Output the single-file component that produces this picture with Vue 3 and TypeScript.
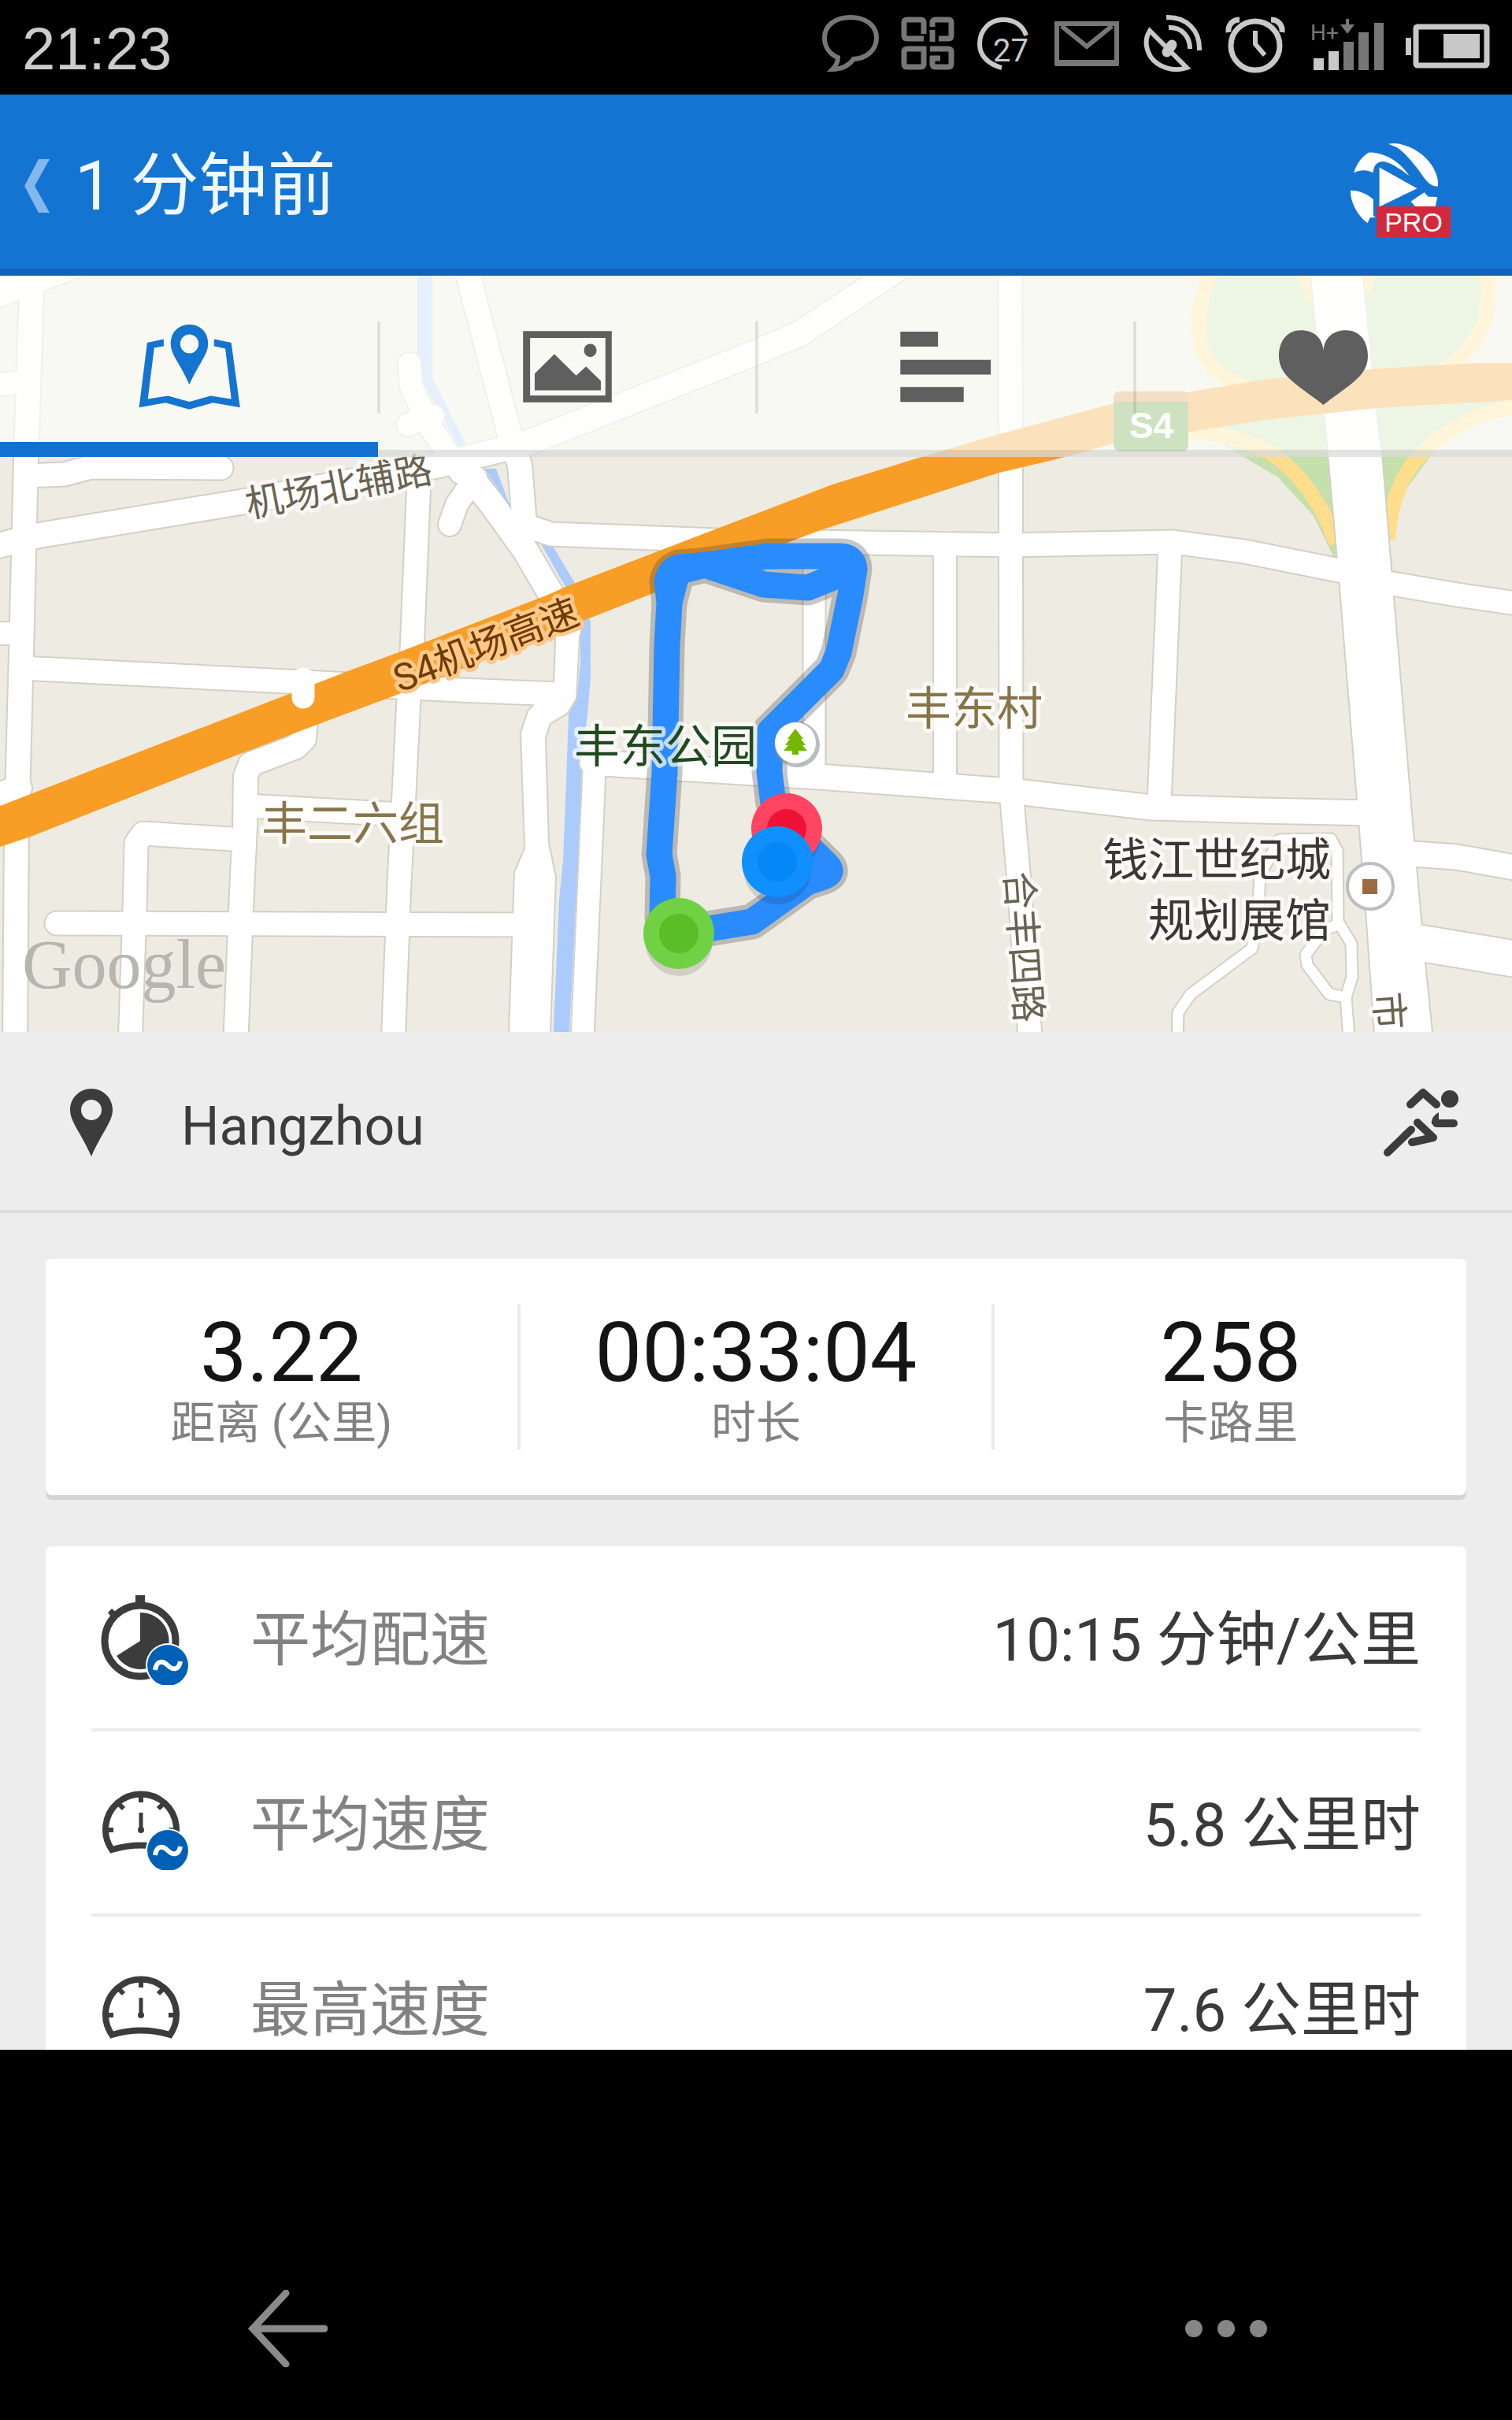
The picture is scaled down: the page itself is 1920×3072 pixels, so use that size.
<script setup lang="ts">
import { ref } from 'vue'

interface Road {
  d: string
  w: number
}

interface Metric {
  icon: 'pace' | 'gauge'
  average: boolean
  label: string
  value: string
}

const tabs = ['地图', '照片', '统计', '心率']
const activeTab = ref(0)

const totals = [
  { value: '3.22', label: '距离 (公里)' },
  { value: '00:33:04', label: '时长' },
  { value: '258', label: '卡路里' },
]

const metrics: Metric[] = [
  { icon: 'pace', average: true, label: '平均配速', value: '10:15 分钟/公里' },
  { icon: 'gauge', average: true, label: '平均速度', value: '5.8 公里时' },
  { icon: 'gauge', average: false, label: '最高速度', value: '7.6 公里时' },
]

const roads: Road[] = [
  { d: 'M41 340L33 580L27 830L26 863L21 1053L19 1330', w: 30 },
  { d: 'M-20 378L120 325', w: 36 },
  { d: 'M-20 491L35 484', w: 28 },
  { d: 'M35 604L82 602L115 593L281 594', w: 29 },
  { d: 'M-20 697L47 680L308 637L560 590L668 563L961 447L1015 424L1145 338', w: 31 },
  { d: 'M-20 804H27', w: 28 },
  { d: 'M-20 1014L25 1000', w: 30 },
  { d: 'M27 848L385 866L584 876L710 881', w: 29 },
  { d: 'M388 915L386 938L376 948L318 970L312 985L311 1050L309 1090L306 1155L299 1330', w: 30 },
  { d: 'M312 1023L510 1034', w: 29 },
  { d: 'M309 1066L182 1058L173 1070L171 1155L165 1330', w: 29 },
  { d: 'M72 1172L680 1174', w: 29 },
  { d: 'M532 610L523 827L519 887L513 1007L507 1120L499 1330', w: 29 },
  { d: 'M520 462L522 490L545 540L585 600', w: 28 },
  { d: 'M518 539L550 528', w: 28 },
  { d: 'M571 666L580 640L604 606', w: 28 },
  { d: 'M592 340L648 555L660 590L666 665', w: 30 },
  { d: 'M585 590L625 640L668 700L706 765L721 800', w: 32 },
  { d: 'M660 665L700 678L908 686L1280 692L1490 688L1580 700L1700 724L1768 741L1850 755L1940 768', w: 29 },
  { d: 'M755 968L739 1330', w: 28 },
  { d: 'M752 968L1040 986L1200 998L1283 1004L1462 1025L1600 1029L1745 1032', w: 31 },
  { d: 'M1780 1083L1850 1088L1940 1104', w: 31 },
  { d: 'M1790 1195L1940 1220', w: 45 },
  { d: 'M1283 340L1284 1004L1293 1107L1309 1330', w: 29 },
  { d: 'M1200 692V998', w: 28 },
  { d: 'M1034 692V986', w: 27 },
  { d: 'M1486 690L1472 1020', w: 29 },
  { d: 'M1495 1330L1496 1285L1512 1262L1590 1204L1597 1170L1600 1110L1625 1066L1690 1065L1698 1080L1699 1170', w: 13 },
  { d: 'M1699 1170L1716 1198L1717 1240L1709 1266L1688 1262L1660 1225L1658 1212L1682 1180L1699 1174', w: 13 },
  { d: 'M1709 1266L1714 1330', w: 13 },
]

const wideRoads = [
  'M1664 340L1682 523L1688 587L1700 722L1725 1028L1736 1170L1748 1340H1821L1809 1222L1795 1068L1766 722L1755 587L1747 523L1729 340Z',
  'M707 790L704 870L679 894L671 903L662 930L667 1077L654 1107L646 1340H697L705 1113L696 1070L692 937L698 918L720 905L731 887L736 790Z',
]

const track =
  'M862 1185L841 1165L842 1112L837 1085L844 980L847 820L850 765L847 738Q850 724 862 720L890 718L975 706H1066Q1084 706 1085 722L1080 755L1065 828L1056 850L978 928L977 980L982 1020L1002 1050L1050 1098Q1060 1108 1046 1113L1025 1120L955 1170L862 1185'
const secondLap = 'M850 765L860 726L895 717L970 742L1026 746L1085 722'

const markers = [
  { x: 999, y: 1052, ring: '#ff4561', core: '#f01235' },
  { x: 987, y: 1094, ring: '#1090ff', core: '#0487f7' },
  { x: 862, y: 1185, ring: '#6fd143', core: '#59be27' },
]
</script>

<template>
  <div class="screen">
    <div class="status">
      <time class="clock">21:23</time>
      <svg class="status-icons" viewBox="1036 10 860 86" aria-hidden="true">
        <g fill="none" stroke="#777" stroke-width="6">
          <path d="M1064 73C1052 68 1047 58 1047 48C1047 32 1061 22 1080 22C1099 22 1113 32 1113 48C1113 64 1100 74 1084 75C1078 83 1070 88 1057 88C1063 82 1064 78 1064 73Z" />
          <path d="M1173 43V29Q1173 25 1169 25H1152Q1148 25 1148 29V45Q1148 49 1152 49H1173M1184 53V38M1184 34V29Q1184 25 1188 25H1204Q1208 25 1208 29V45Q1208 49 1204 49H1192M1173 70V62H1152Q1148 62 1148 66V81Q1148 85 1152 85H1169Q1173 85 1173 81V70M1181 62H1204Q1208 62 1208 66V81Q1208 85 1204 85H1188Q1184 85 1184 81V74H1194" stroke-width="7" />
          <path d="M1342 30H1418V80H1342ZM1348 33L1380 59L1412 33" />
          <path d="M1340 80H1420" stroke-width="8" />
        </g>
        <g fill="none" stroke="#c8c8c8" stroke-width="6">
          <path d="M1303 45C1299 32 1288 25 1274 25C1257 25 1244 38 1244 56C1244 70 1254 81 1272 86" />
          <path d="M1460 39L1507 86C1490 92 1470 85 1461 72C1453 58 1455 47 1460 39Z" />
          <path d="M1481 22C1506 21 1524 38 1523 64M1484 35C1500 34 1511 46 1511 62" />
          <path d="M1482 66L1488 57" stroke-width="13" stroke-linecap="round" />
          <circle cx="1594" cy="58" r="31" stroke-width="7" />
          <path d="M1594 39V56L1606 70" />
          <path d="M1560 41C1559 32 1565 25 1574 25M1628 41C1629 32 1623 25 1614 25" stroke-width="7" />
          <rect x="1798" y="34" width="90" height="49" rx="2" stroke-width="7" />
        </g>
        <path d="M1668 74H1681V89H1668ZM1687 65H1700V89H1687ZM1785 48H1792V70H1785ZM1833 43H1879V74H1833Z" fill="#c8c8c8" />
        <path d="M1706 53H1719V89H1706ZM1725 41H1738V89H1725ZM1745 29H1757V89H1745ZM1709 24H1713V31H1720L1711 43L1702 31H1709Z" fill="#777" />
        <text x="1261" y="78" font-size="40" fill="#c8c8c8">27</text>
        <text x="1664" y="51" font-size="28" fill="#777">H+</text>
      </svg>
    </div>

    <header class="bar">
      <a class="back" href="#">
        <svg class="chevron" viewBox="0 0 32 68" aria-hidden="true">
          <path d="M18 0H32L13 34L32 68H18L0 34Z" fill="#84b7ec" />
        </svg>
        <span>1 分钟前</span>
      </a>
      <div class="brand">
        <svg class="brand-mark" viewBox="1040 170 300 340" preserveAspectRatio="none" aria-hidden="true">
          <g fill="#fff">
            <path d="M1185 190C1230 180 1290 215 1320 270C1335 300 1342 325 1340 352C1325 355 1310 340 1300 325C1275 280 1240 225 1210 202Z" />
            <path d="M1077 300C1088 262 1105 235 1125 223C1170 222 1220 255 1250 312C1230 295 1200 262 1168 257C1150 258 1140 270 1137 300C1118 288 1098 288 1077 300Z" />
            <path d="M1157 280L1275 360L1157 430Z" />
            <path d="M1067 368C1095 368 1120 382 1138 402V465L1146 470L1128 472L1120 493C1090 465 1066 415 1067 368Z" />
            <path d="M1297 375L1310 392L1338 393L1332 430H1270L1255 410Z" />
          </g>
        </svg>
        <span class="pro">PRO</span>
      </div>
    </header>

    <main class="content">
      <section class="map">
        <svg class="map-canvas" viewBox="0 350 1920 960" role="img" aria-label="路线地图">
          <rect x="0" y="350" width="1920" height="960" fill="#eeebe2" />

          <g fill="#c5e0ac">
            <path d="M1545 340C1520 385 1520 430 1540 465C1560 490 1600 495 1700 490V340Z" />
            <path d="M1720 340V490L1800 475C1850 465 1895 420 1884 340Z" />
            <path d="M1520 545L1576 578L1623 606L1668 655L1695 710L1710 600L1700 500Z" />
            <path d="M1740 500L1920 505L1830 560L1765 650L1745 600Z" />
          </g>
          <g class="ramps">
            <path d="M1542 340C1517 385 1516 430 1535 460C1548 482 1575 490 1610 500" />
            <path d="M1888 340C1896 395 1885 440 1825 475" />
            <path d="M1656 340L1668 380M1738 340L1732 370" />
            <path d="M1510 548C1560 550 1600 565 1625 583C1660 610 1685 655 1697 690" />
            <path d="M1930 516C1860 525 1822 558 1797 585C1775 610 1765 650 1762 685" />
          </g>
          <path
            d="M530 340V460L536 483L600 600L612 590L648 645L685 687L718 745L737 790V840L733 885L722 907L719 993L715 1093L710 1143L708 1190L702 1330H722L729 1190L734 1093L739 967L746 907L750 860V790L730 740L700 690L650 650L605 590L549 480V340Z"
            fill="#aacbfb"
          />

          <g class="road-edge">
            <path v-for="(road, i) in roads" :key="i" :d="road.d" :stroke-width="road.w + 4" />
            <path v-for="(d, i) in wideRoads" :key="'w' + i" :d="d" stroke-width="4" />
          </g>
          <g class="road-fill">
            <path v-for="(road, i) in roads" :key="i" :d="road.d" :stroke-width="road.w" />
          </g>
          <path v-for="(d, i) in wideRoads" :key="'f' + i" :d="d" fill="#fff" />
          <path d="M616 595H630L649 646Z" fill="#aacbfb" />

          <path
            d="M0 1023L439 853L509 827L696 755L718 745L908 672L1057 615L1167 581L1269 551L1411 513L1513 497L1611 481L1749 468L1872 461H1920V508L1749 518L1607 533L1415 563L1341 583L1269 600L1042 673L832 752L743 787L504 882L405 919L310 955L39 1062L0 1075Z"
            fill="#f89e26"
          />
          <path d="M385 862V885" stroke="#fff" stroke-width="29" stroke-linecap="round" />

          <rect x="1414" y="497" width="95" height="76" rx="8" fill="#5f9e3a" />
          <path d="M1414 510V505Q1414 497 1422 497H1501Q1509 497 1509 505V510Z" fill="#da9448" />
          <text class="shield" x="1462" y="556">S4</text>

          <g class="track-shadow">
            <path :d="track" />
            <path :d="secondLap" />
          </g>
          <g class="track">
            <path :d="track" />
            <path :d="secondLap" />
            <path d="M987 1094L1046 1104" />
          </g>

          <text class="place google" x="28" y="1254">Google</text>

          <text class="place street" transform="translate(430 618) rotate(-11)" y="17">机场北辅路</text>
          <text class="place highway" transform="translate(617 819) rotate(-21)" y="17">S4机场高速</text>
          <text class="place street" transform="translate(1300 1202) rotate(86)" y="17">合丰四路</text>
          <text class="place street" transform="translate(1764 1283) rotate(86)" y="17">市</text>
          <text class="place park" x="845" y="968">丰东公园</text>
          <text class="place village" x="1237" y="920">丰东村</text>
          <text class="place village" x="448" y="1066">丰二六组</text>
          <text class="place museum" x="1690" y="1112">钱江世纪城</text>
          <text class="place museum" x="1690" y="1189">规划展馆</text>

          <circle cx="1012" cy="945" r="29" fill="#8b8f98" opacity="0.6" />
          <circle cx="1010" cy="943" r="26" fill="#fff" />
          <path d="M1010 925L1020 938H1017L1023 946H1019L1025 953H1014V958H1006V953H995L1001 946H997L1003 938H1000Z" fill="#73b700" />
          <circle cx="1740" cy="1125" r="29" fill="#fff" stroke="#bdbec2" stroke-width="4" />
          <rect x="1730" y="1116" width="19" height="19" fill="#9b6a43" />

          <g v-for="m in markers" :key="m.ring">
            <ellipse :cx="m.x" :cy="m.y + 10" rx="43" ry="44" fill="#000" opacity="0.12" />
            <circle :cx="m.x" :cy="m.y" r="45" :fill="m.ring" />
            <circle :cx="m.x" :cy="m.y" r="25" :fill="m.core" />
          </g>
        </svg>

        <nav class="tabs">
          <button
            v-for="(tab, i) in tabs"
            :key="tab"
            type="button"
            class="tab"
            :class="{ active: i === activeTab }"
            :aria-label="tab"
            @click="activeTab = i"
          >
            <svg v-if="i === 0" class="tab-icon" viewBox="378 200 320 350" preserveAspectRatio="none">
              <path d="M538 215C568 215 591 243 591 288C591 330 565 360 538 443C511 360 485 330 485 288C485 243 508 215 538 215ZM538 252A26 36 0 1 0 538 324A26 36 0 1 0 538 252ZM465 270L418 284L395 530L470 512L538 537L605 512L682 530L657 284L608 270V297L640 306L657 498L598 486L538 508L477 486L420 498L438 303L465 297Z" fill-rule="evenodd" />
            </svg>
            <svg v-else-if="i === 1" class="tab-icon" viewBox="19 201 320 350" preserveAspectRatio="none">
              <path d="M53 241H305V511H53ZM73 267V485H287V267ZM86 402L142 328L204 410L232 375L274 430V466H86Z" fill-rule="evenodd" />
              <ellipse cx="244" cy="314" rx="18" ry="25" />
            </svg>
            <svg v-else-if="i === 2" class="tab-icon" viewBox="1094 200 320 350" preserveAspectRatio="none">
              <path d="M1126 242H1233V299H1126ZM1126 349H1383V405H1126ZM1126 452H1306V509H1126Z" />
            </svg>
            <svg v-else class="tab-icon heart" viewBox="820 860 320 350" preserveAspectRatio="none">
              <path d="M980 972C984 925 1010 897 1050 897C1090 897 1118 935 1118 995C1118 1075 1050 1110 980 1180C910 1110 842 1075 842 995C842 935 870 897 910 897C950 897 976 925 980 972Z" />
            </svg>
          </button>
        </nav>
      </section>

      <section class="location">
        <svg class="pin" viewBox="0 0 54 86" aria-hidden="true">
          <path d="M27 0C42 0 54 12 54 27C54 42 40 56 27 86C14 56 0 42 0 27C0 12 12 0 27 0ZM27 14A13 13 0 1 0 27 40A13 13 0 1 0 27 14Z" fill="#3c3c3c" fill-rule="evenodd" />
        </svg>
        <span class="city">Hangzhou</span>
        <svg class="runner" viewBox="1757 1380 98 92" aria-hidden="true">
          <g fill="none" stroke="#3c3c3c" stroke-width="10" stroke-linecap="round" stroke-linejoin="round">
            <path d="M1792 1403L1808 1388L1825 1403" />
            <path d="M1801 1426L1821 1445L1794 1451M1793 1435L1763 1464" />
            <path d="M1825 1427H1847" />
          </g>
          <path d="M1828 1413V1428H1819C1818 1422 1821 1417 1828 1413Z" fill="#3c3c3c" />
          <circle cx="1842" cy="1396" r="11" fill="#3c3c3c" />
        </svg>
      </section>

      <section class="cards">
        <dl class="card totals">
          <div v-for="t in totals" :key="t.label" class="total">
            <dd>{{ t.value }}</dd>
            <dt>{{ t.label }}</dt>
          </div>
        </dl>

        <dl class="card metrics">
          <div v-for="m in metrics" :key="m.label" class="metric">
            <svg class="metric-icon" viewBox="0 0 120 120" aria-hidden="true">
              <template v-if="m.icon === 'pace'">
                <circle cx="54" cy="64" r="45" fill="none" stroke="#3c3c3c" stroke-width="9" />
                <path d="M48 6H60V19H48ZM13 28L18 23L26 30L19 36Z" fill="#3c3c3c" />
                <path d="M54 64V28A36 36 0 1 1 24 83Z" fill="#3c3c3c" />
              </template>
              <template v-else>
                <g fill="none" stroke="#3c3c3c" stroke-width="8">
                  <path d="M18 94A45 45 0 1 1 92 94Q55 83 18 94Z" />
                  <path d="M55 23V34M27 36L33 42M83 36L77 42M11 69H20M90 69H99" stroke-width="6" />
                  <path d="M55 47V71" stroke-width="5" />
                </g>
                <circle cx="55" cy="69" r="4" fill="#3c3c3c" />
              </template>
              <template v-if="m.average">
                <circle cx="89" cy="95" r="28" fill="#fff" />
                <circle cx="89" cy="95" r="26" fill="#0060b6" />
                <path d="M73 101C75 88 83 89 89 95C95 101 103 102 105 90" fill="none" stroke="#fff" stroke-width="6" />
              </template>
            </svg>
            <dt>{{ m.label }}</dt>
            <dd>{{ m.value }}</dd>
          </div>
        </dl>
      </section>
    </main>

    <footer class="softkeys">
      <button type="button" aria-label="返回">
        <svg class="key-back" viewBox="0 0 102 98">
          <path d="M98 49H8M49 4L7 49L49 94" fill="none" stroke="#8a8a8a" stroke-width="9" stroke-linecap="round" />
        </svg>
      </button>
      <button type="button" aria-label="更多">
        <svg class="key-more" viewBox="0 0 104 22">
          <circle cx="11" cy="11" r="11" />
          <circle cx="52" cy="11" r="11" />
          <circle cx="93" cy="11" r="11" />
        </svg>
      </button>
    </footer>
  </div>
</template>

<style>
body {
  margin: 0;
  background: #000;
}
</style>

<style scoped>
.screen {
  display: flex;
  flex-direction: column;
  height: 100vh;
  overflow: hidden;
  background: #000;
  font-family: Roboto, 'Noto Sans CJK SC', sans-serif;
}

button {
  margin: 0;
  padding: 0;
  border: 0;
  background: none;
  cursor: pointer;
}

svg {
  display: block;
  flex: none;
}

dl,
dt,
dd {
  margin: 0;
}

.status {
  display: flex;
  flex: none;
  align-items: center;
  justify-content: space-between;
  box-sizing: border-box;
  height: 120px;
  padding: 0 24px 0 28px;
}

.clock {
  padding-top: 2px;
  color: #ccc;
  font: 76px 'Liberation Sans', sans-serif;
}

.status-icons {
  width: 860px;
  height: 86px;
  margin-bottom: 14px;
}

.bar {
  display: flex;
  flex: none;
  align-items: center;
  justify-content: space-between;
  box-sizing: border-box;
  height: 230px;
  padding: 10px 78px 0 31px;
  border-bottom: 9px solid #1063b8;
  background: #1474d2;
}

.back {
  display: flex;
  align-items: center;
  gap: 32px;
  color: #f0f8ff;
  font-size: 87px;
  line-height: 100px;
  text-decoration: none;
}

.chevron {
  width: 32px;
  height: 68px;
}

.brand {
  position: relative;
  width: 138px;
  height: 120px;
}

.brand-mark {
  width: 122px;
  height: 113px;
}

.pro {
  position: absolute;
  right: 0;
  bottom: -6px;
  width: 94px;
  background: #d22a3c;
  color: #fff;
  font: 34px/40px 'Liberation Sans', sans-serif;
  text-align: center;
}

.content {
  flex: 1;
  min-height: 0;
  overflow: hidden;
  background: #ededed;
}

.map {
  position: relative;
}

.map-canvas {
  width: 100%;
  height: auto;
}

.ramps {
  fill: none;
  stroke: #fedd8c;
  stroke-width: 19px;
}

.road-edge {
  fill: none;
  stroke: #d3d0c5;
  stroke-linecap: round;
  stroke-linejoin: round;
}

.road-fill {
  fill: none;
  stroke: #fff;
  stroke-linecap: round;
  stroke-linejoin: round;
}

.track,
.track-shadow {
  fill: none;
  stroke-linejoin: round;
}

.track {
  stroke: #2a8bfd;
  stroke-width: 33px;
}

.track-shadow {
  opacity: 0.28;
  stroke: #3a3a3a;
  stroke-width: 45px;
}

.shield {
  fill: #fff;
  font: bold 46px 'Liberation Sans', sans-serif;
  text-anchor: middle;
}

.place {
  font-size: 58px;
  text-anchor: middle;
  paint-order: stroke;
  stroke: rgba(255, 255, 255, 0.7);
  stroke-width: 10px;
  stroke-linejoin: round;
}

.street {
  fill: #6a6352;
  font-size: 48px;
}

.highway {
  fill: #6e3c04;
  stroke: #fdc888;
  font-size: 48px;
}

.park {
  fill: #1f4a20;
}

.village {
  fill: #87754a;
}

.museum {
  fill: #393836;
  text-anchor: end;
}

.google {
  fill: #b7b5af;
  stroke: none;
  font-family: 'Liberation Serif', serif;
  font-size: 88px;
  text-anchor: start;
}

.tabs {
  position: absolute;
  inset: 0 0 auto 0;
  display: flex;
  height: 230px;
  background: rgba(253, 255, 252, 0.7);
}

.tab {
  position: relative;
  display: flex;
  flex: 1;
  align-items: center;
  justify-content: center;
  box-shadow: inset 0 -9px 0 rgba(120, 120, 120, 0.2);
  fill: #5f5f5f;
}

.tab.active {
  box-shadow: inset 0 -19px 0 #1270d0;
  fill: #1474d0;
}

.tab + .tab::before {
  content: '';
  position: absolute;
  top: 58px;
  left: -1px;
  width: 4px;
  height: 117px;
  background: rgba(0, 0, 0, 0.1);
}

.tab-icon {
  width: 143px;
  height: 117px;
}

.tab-icon.heart {
  width: 131px;
}

.location {
  display: flex;
  align-items: center;
  box-sizing: border-box;
  height: 230px;
  padding: 4px 66px 0 89px;
  border-bottom: 4px solid #dcdcdc;
}

.pin {
  width: 54px;
  height: 86px;
}

.city {
  flex: 1;
  margin-left: 87px;
  padding-top: 10px;
  color: #3c3c3c;
  font-size: 68px;
  line-height: 80px;
}

.runner {
  width: 98px;
  height: 92px;
}

.cards {
  display: flex;
  flex-direction: column;
  gap: 65px;
  padding: 58px;
}

.card {
  border-radius: 8px;
  background: #fff;
  box-shadow: 0 6px 0 #d4d4d4;
}

.totals {
  display: flex;
  padding: 58px 0;
}

.total {
  display: flex;
  flex: 1;
  flex-direction: column;
  align-items: center;
  box-sizing: border-box;
  height: 184px;
  padding-top: 3px;
  border-right: 4px solid #e9e9e9;
}

.total:last-child {
  border-right: 0;
}

.total dd {
  color: #141414;
  font-size: 106px;
  line-height: 116px;
}

.total dt {
  color: #828282;
  font-size: 57px;
  line-height: 64px;
}

.metrics {
  padding: 0 58px;
}

.metric {
  display: flex;
  align-items: center;
  height: 231px;
  padding-left: 8px;
  font-size: 76px;
  line-height: 100px;
}

.metric + .metric {
  border-top: 4px solid #ececec;
}

.metric-icon {
  width: 120px;
  height: 120px;
}

.metric dt {
  flex: 1;
  margin-left: 74px;
  padding-top: 6px;
  color: #828282;
}

.metric dd {
  padding-top: 6px;
  color: #3a3a3a;
}

.softkeys {
  display: flex;
  flex: none;
  align-items: flex-end;
  justify-content: space-between;
  box-sizing: border-box;
  height: 470px;
  padding: 0 311px 67px 314px;
}

.softkeys button {
  display: flex;
  align-items: center;
  height: 98px;
}

.key-back {
  width: 102px;
  height: 98px;
}

.key-more {
  width: 104px;
  height: 22px;
  fill: #868686;
}
</style>
